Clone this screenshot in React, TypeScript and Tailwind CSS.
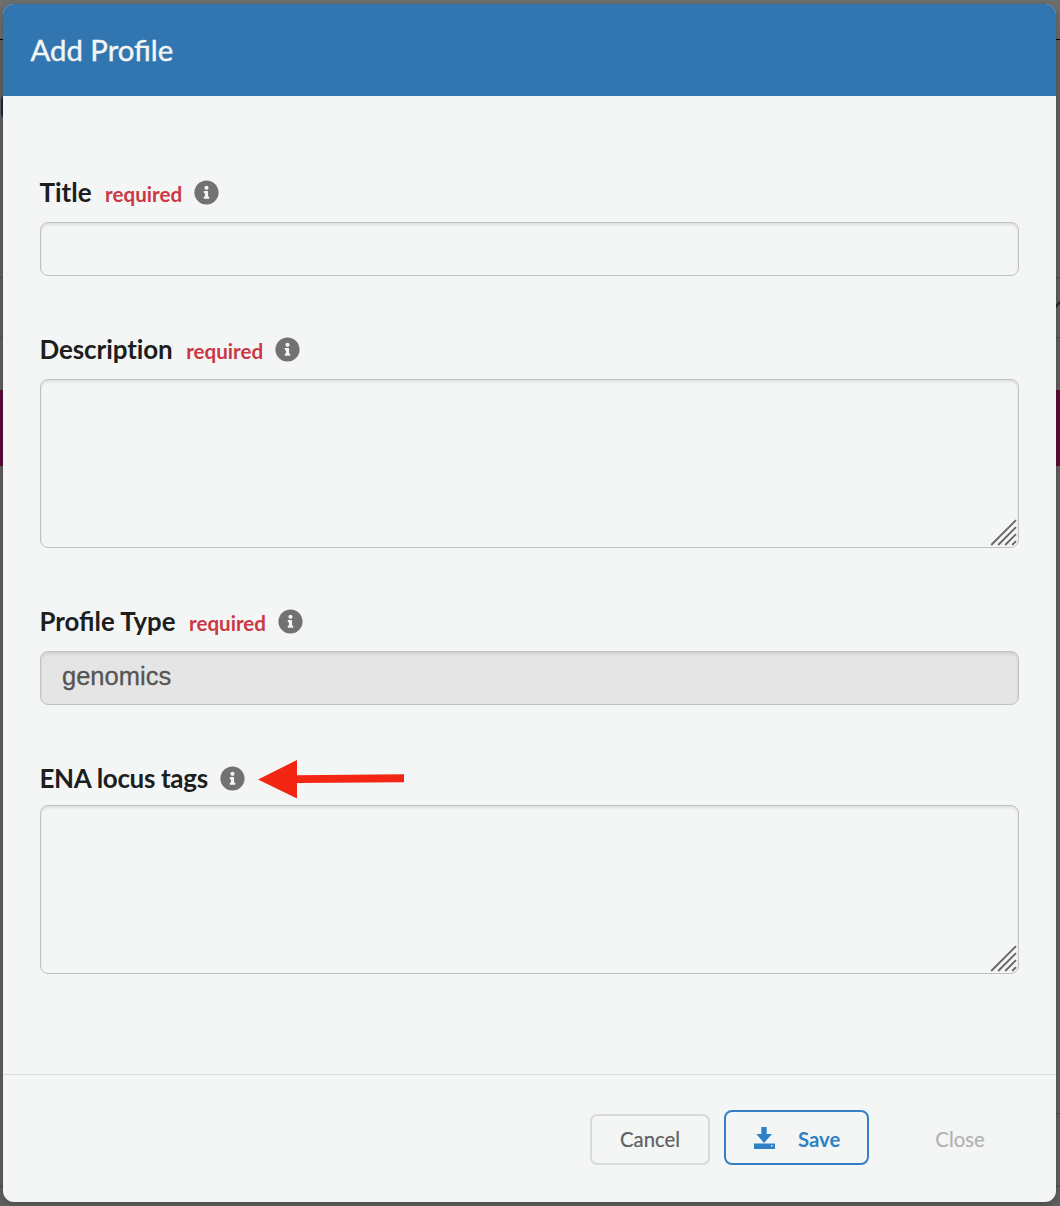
import React from "react";
import { FaInfoCircle } from "react-icons/fa";

const boxClass =
  "w-full rounded-[8px] border border-[#c0c1c1] shadow-[inset_0_2px_3px_rgba(0,0,0,0.09)] outline-none";

function Label({ text, textClass, required, children }: { text: string; textClass: string; required?: boolean; children?: React.ReactNode }) {
  return (
    <div className="-ml-[0.5px] flex h-8 items-center whitespace-nowrap">
      <span className={`leading-8 font-bold text-[#1d1e1e] ${textClass}`}>{text}</span>
      {required && (
        <span className="ml-[13.500px] pt-1 text-[20.600px] leading-7 font-bold text-[#cb3846]">required</span>
      )}
      <FaInfoCircle className="ml-3 size-[25px] shrink-0 text-[#727272]" />
      {children}
    </div>
  );
}

function TextArea({ label }: { label: string }) {
  return (
    <div className="relative h-[169px]">
      <textarea aria-label={label} className={`${boxClass} block h-[169px] resize-none bg-transparent`} />
      <svg className="pointer-events-none absolute right-[2px] bottom-[2px]" width="27" height="27" viewBox="0 0 27 27" fill="none" stroke="#686868" strokeWidth="1.9">
        <path d="M1.2 26 26 1.2M8.2 26 26 8.2M15.2 26 26 15.2M22.2 26 26 22.2" />
      </svg>
    </div>
  );
}

export default function App() {
  return (
    <div className="relative h-[1206px] w-[1060px] overflow-hidden bg-[#646464] pt-1 pl-[3px] font-['Lato',sans-serif]">
      <div className="absolute inset-x-0 top-0 h-10 border-b border-black bg-[#707070]" />
      <div className="absolute top-[93px] left-px h-7 w-2 rounded-l-full bg-[#1d2b49]" />
      <div className="absolute inset-x-0 top-[277px] h-[61px] border-y border-[#505050]" />
      <svg className="absolute top-[300px] right-0" width="5" height="10" viewBox="0 0 5 10" fill="none" stroke="#222" strokeWidth="2">
        <path d="M0 7.500 5 2" />
      </svg>
      <div className="absolute inset-x-0 top-[390px] h-[76px] bg-[#600c3f]" />
      <div className="absolute right-0 top-[1113px] h-[74px] w-5 border-y border-[#505050]" />
      <div className="absolute left-0 top-[1186px] h-px w-5 bg-[#4a4a4a]" />

      <div className="relative flex h-[1198px] w-[1053px] flex-col overflow-hidden rounded-[11px] bg-[#f4f6f5] shadow-[0_3px_12px_rgba(0,0,0,0.3)]">
        <header className="flex h-[92px] shrink-0 items-center bg-[#3276b1] pl-[27.500px]">
          <h1 className="text-[29.300px] leading-9 font-normal text-[#f4f6f5] [-webkit-text-stroke:0.4px_#f4f6f5]">Add Profile</h1>
        </header>

        <main className="flex h-[978px] shrink-0 flex-col px-[37px] pt-[80px]">
          <section className="h-[157px]">
            <Label text="Title" textClass="text-[26px]" required />
            <input aria-label="Title" className={`${boxClass} mt-[14px] block h-[54px] bg-transparent`} />
          </section>
          <section className="h-[272px]">
            <Label text="Description" textClass="text-[26px] tracking-[-0.1px]" required />
            <div className="mt-[14px]"><TextArea label="Description" /></div>
          </section>
          <section className="h-[157px]">
            <Label text="Profile Type" textClass="text-[25.800px]" required />
            <div className={`${boxClass} mt-[14px] flex h-[54px] items-center bg-[#e5e5e5] px-[21px] pb-[3px] font-['Liberation_Sans',sans-serif] text-[25.500px] text-[#555] [-webkit-text-stroke:0.3px_#555]`}>
              genomics
            </div>
          </section>
          <section>
            <Label text="ENA locus tags" textClass="text-[26px] tracking-[-0.330px]">
              <svg className="mt-px ml-[12.500px]" width="148" height="40" viewBox="0 0 148 40" fill="#f22613">
                <path d="M1 20.500 40 1V16.200L147 15.200V23.200L40 24V39.500Z" />
              </svg>
            </Label>
            <div className="mt-[11px]"><TextArea label="ENA locus tags" /></div>
          </section>
        </main>

        <footer className="flex flex-1 items-start justify-end border-t border-[#dcdddd] pt-[35px] pr-[49px] text-[20.300px]">
          <button className="mt-1 h-[51px] w-[120px] rounded-[7px] border-2 border-[#d9dada] text-[#5e5f5f] [-webkit-text-stroke:0.2px_#5e5f5f]">Cancel</button>
          <button className="ml-[14px] flex h-[55px] w-[145px] items-center rounded-[8px] border-2 border-[#3480c4] pt-1 pl-7 font-bold text-[#2f80c7]">
            <svg className="-mt-1" width="21" height="22" viewBox="0 0 21 22" fill="currentColor">
              <path d="M7.300 0h5.400v7h5.300l-8 9L2.300 7h5zM0 16.500h21V22H0z" />
              <path d="M17 18h1.500v1.500H17z" fill="#d7e6f3" />
            </svg>
            <span className="ml-[23px]">Save</span>
          </button>
          <button className="mt-1 ml-[44px] h-[51px] w-[94px] text-[#b1b2b2] [-webkit-text-stroke:0.2px_#b1b2b2]">Close</button>
        </footer>
      </div>
    </div>
  );
}
